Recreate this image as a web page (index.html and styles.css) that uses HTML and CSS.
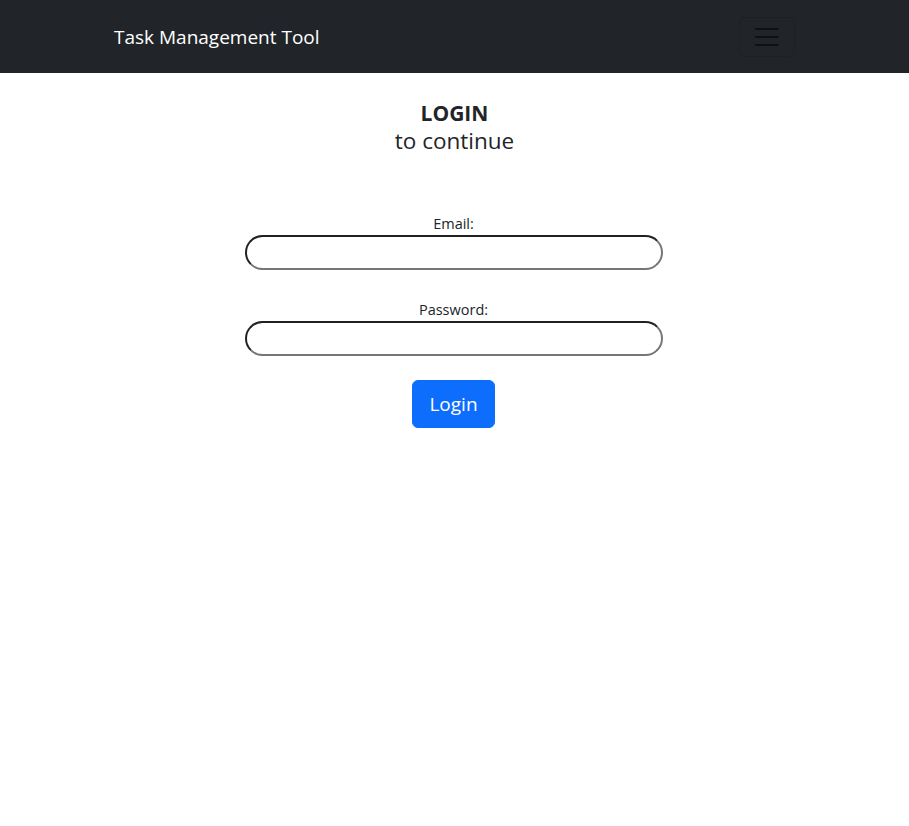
FILE: index.html
```html
<!DOCTYPE html>
<html lang="en">
<head>
<meta charset="utf-8">
<title>Task Management Tool</title>
<link rel="stylesheet" href="styles.css">
</head>
<body>
<nav class="navbar">
  <div class="nav-inner">
    <a class="brand" href="#">Task Management Tool</a>
    <button class="toggler" type="button" aria-label="Toggle navigation">
      <svg width="30" height="30" viewBox="0 0 30 30"><path d="M4 7h22M4 15h22M4 23h22" stroke="rgba(0,0,0,0.55)" stroke-width="2" stroke-linecap="round"/></svg>
    </button>
  </div>
</nav>
<main class="main">
  <h2 class="title"><strong>LOGIN</strong><br>to continue</h2>
  <form class="form">
    <label class="label" for="email">Email:</label>
    <input class="input" id="email" type="email">
    <label class="label" for="password">Password:</label>
    <input class="input" id="password" type="password">
    <button class="btn" type="button">Login</button>
  </form>
</main>
</body>
</html>
```
FILE: styles.css
```css
* { box-sizing: border-box; }
body {
  margin: 0;
  font-family: "Open Sans", "Noto Sans", sans-serif;
  color: #212529;
  background: #fff;
}
.navbar {
  background: #212529;
  height: 73px;
  display: flex;
  align-items: center;
}
.nav-inner {
  width: 681px;
  margin: 0 auto;
  display: flex;
  align-items: center;
  justify-content: space-between;
}
.brand {
  color: #fff;
  text-decoration: none;
  font-size: 19px;
}
.toggler {
  width: 56px;
  height: 40px;
  background: transparent;
  border: 1px solid rgba(0,0,0,0.12);
  border-radius: 6px;
  display: flex;
  align-items: center;
  justify-content: center;
  padding: 0;
  margin-top: 1px;
}
.main {
  display: flex;
  flex-direction: column;
  align-items: center;
  padding-top: 26px;
}
.title {
  margin: 0;
  text-align: center;
  font-weight: 400;
  font-size: 22.5px;
  line-height: 27px;
}
.title strong { font-weight: 700; font-size: 21px; }
.form {
  display: flex;
  flex-direction: column;
  align-items: center;
  margin-top: 60px;
  margin-right: 2px;
}
.label {
  font-size: 14.5px;
  line-height: 20px;
}
.input {
  width: 418px;
  height: 35px;
  border-radius: 18px;
  border: 2px inset #767676;
  margin: 1px 0 30px;
}
.btn {
  margin-top: -6px;
  background: #0d6efd;
  color: #fff;
  border: 1px solid #0d6efd;
  border-radius: 6px;
  font-family: inherit;
  font-size: 19px;
  padding: 0 16px;
  height: 48px;
  width: 83px;
}
```
